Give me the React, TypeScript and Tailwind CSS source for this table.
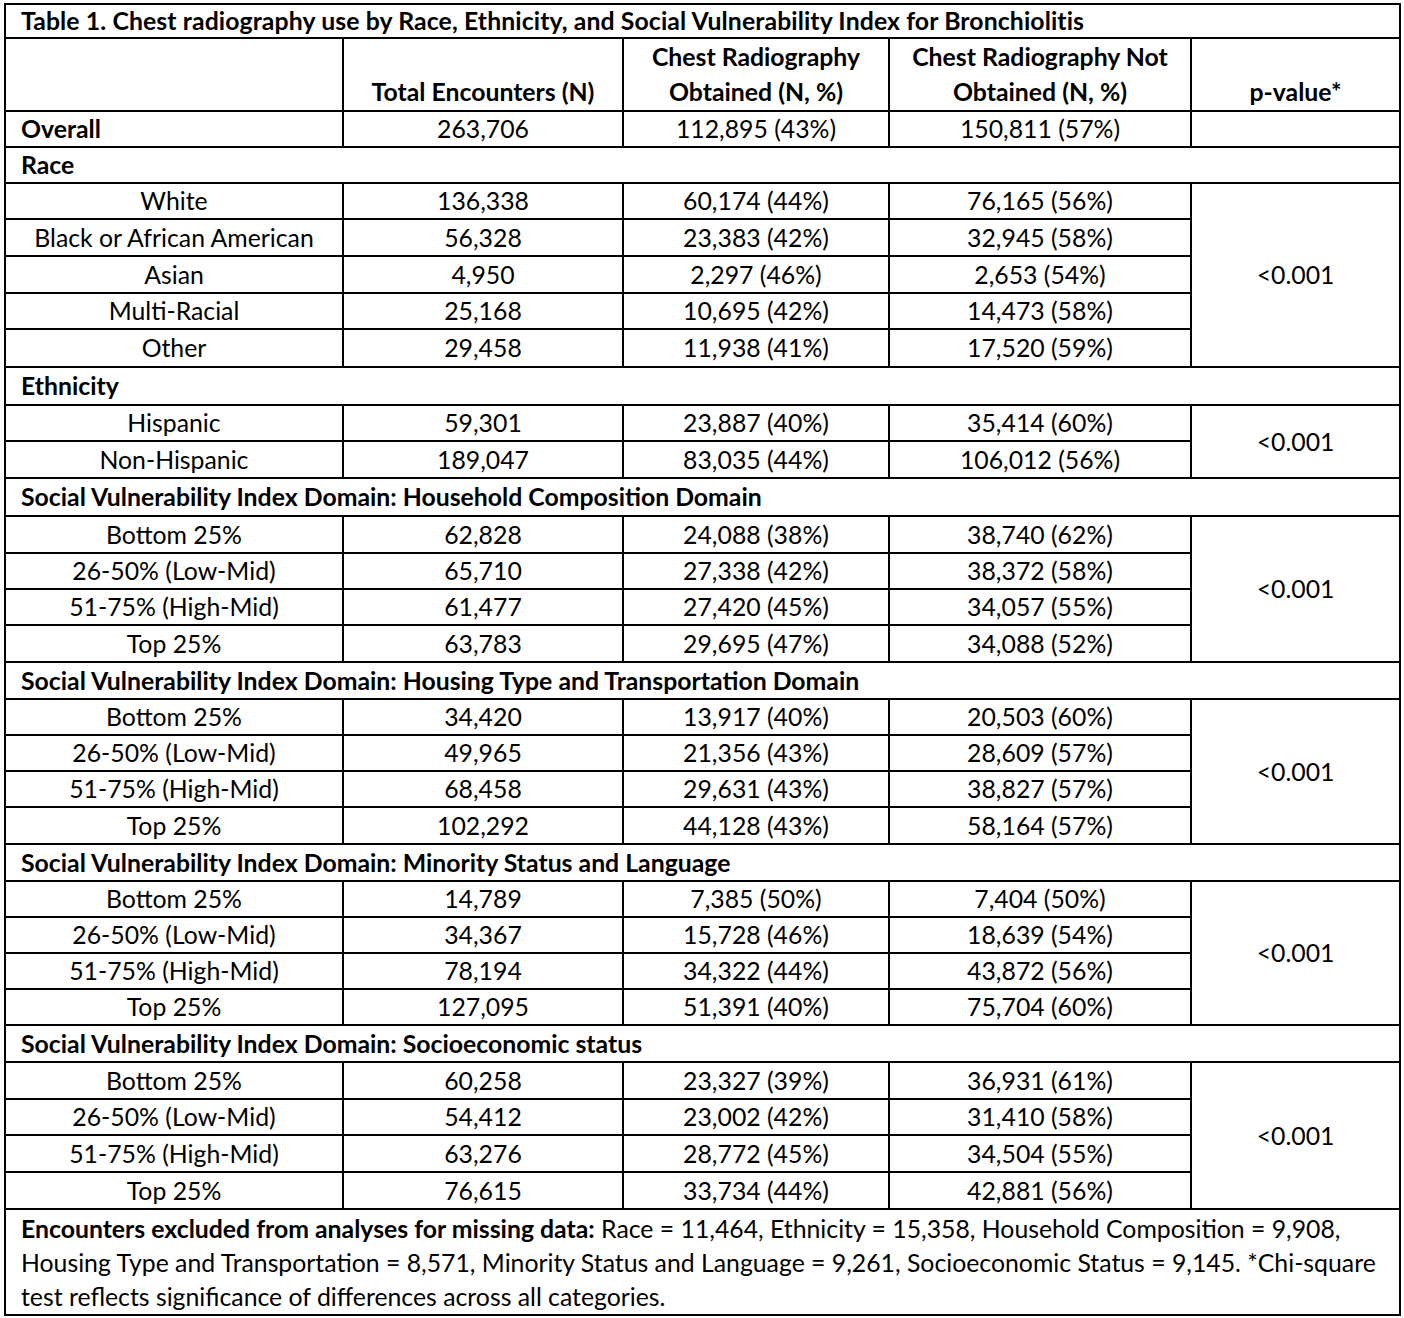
const groups = [
  {
    title: 'Race',
    hh: 36,
    heights: [36, 37, 37, 36, 38],
    rows: [
      ['White', '136,338', '60,174 (44%)', '76,165 (56%)'],
      ['Black or African American', '56,328', '23,383 (42%)', '32,945 (58%)'],
      ['Asian', '4,950', '2,297 (46%)', '2,653 (54%)'],
      ['Multi-Racial', '25,168', '10,695 (42%)', '14,473 (58%)'],
      ['Other', '29,458', '11,938 (41%)', '17,520 (59%)'],
    ],
  },
  {
    title: 'Ethnicity',
    hh: 38,
    heights: [36, 37],
    rows: [
      ['Hispanic', '59,301', '23,887 (40%)', '35,414 (60%)'],
      ['Non-Hispanic', '189,047', '83,035 (44%)', '106,012 (56%)'],
    ],
  },
  {
    title: 'Social Vulnerability Index Domain: Household Composition Domain',
    hh: 38,
    heights: [37, 36, 36, 37],
    rows: [
      ['Bottom 25%', '62,828', '24,088 (38%)', '38,740 (62%)'],
      ['26-50% (Low-Mid)', '65,710', '27,338 (42%)', '38,372 (58%)'],
      ['51-75% (High-Mid)', '61,477', '27,420 (45%)', '34,057 (55%)'],
      ['Top 25%', '63,783', '29,695 (47%)', '34,088 (52%)'],
    ],
  },
  {
    title: 'Social Vulnerability Index Domain: Housing Type and Transportation Domain',
    hh: 37,
    heights: [36, 36, 36, 37],
    rows: [
      ['Bottom 25%', '34,420', '13,917 (40%)', '20,503 (60%)'],
      ['26-50% (Low-Mid)', '49,965', '21,356 (43%)', '28,609 (57%)'],
      ['51-75% (High-Mid)', '68,458', '29,631 (43%)', '38,827 (57%)'],
      ['Top 25%', '102,292', '44,128 (43%)', '58,164 (57%)'],
    ],
  },
  {
    title: 'Social Vulnerability Index Domain: Minority Status and Language',
    hh: 37,
    heights: [36, 36, 36, 36],
    rows: [
      ['Bottom 25%', '14,789', '7,385 (50%)', '7,404 (50%)'],
      ['26-50% (Low-Mid)', '34,367', '15,728 (46%)', '18,639 (54%)'],
      ['51-75% (High-Mid)', '78,194', '34,322 (44%)', '43,872 (56%)'],
      ['Top 25%', '127,095', '51,391 (40%)', '75,704 (60%)'],
    ],
  },
  {
    title: 'Social Vulnerability Index Domain: Socioeconomic status',
    hh: 37,
    heights: [37, 36, 37, 37],
    rows: [
      ['Bottom 25%', '60,258', '23,327 (39%)', '36,931 (61%)'],
      ['26-50% (Low-Mid)', '54,412', '23,002 (42%)', '31,410 (58%)'],
      ['51-75% (High-Mid)', '63,276', '28,772 (45%)', '34,504 (55%)'],
      ['Top 25%', '76,615', '33,734 (44%)', '42,881 (56%)'],
    ],
  },
];

const heightClass: Record<number, string> = {
  36: 'h-[36px]',
  37: 'h-[37px]',
  38: 'h-[38px]',
};

const cell = 'border-2 border-black p-0';

export default function App() {
  return (
    <div className="min-h-[1318px] bg-white pl-[4px] pt-[3px] text-black">
      <table
        className="w-[1395px] table-fixed border-collapse border-2 border-black text-[24.8px] leading-none"
        style={{ fontFamily: 'Lato, "Open Sans", sans-serif' }}
      >
        <colgroup>
          <col className="w-[338px]" />
          <col className="w-[280px]" />
          <col className="w-[266px]" />
          <col className="w-[302px]" />
          <col className="w-[209px]" />
        </colgroup>
        <tbody>
          <tr className="h-[34px]">
            <td colSpan={5} className={`${cell} pl-[15px] text-left font-bold tracking-[0.1px]`}>
              Table 1. Chest radiography use by Race, Ethnicity, and Social Vulnerability Index for Bronchiolitis
            </td>
          </tr>
          <tr className="h-[72px] font-bold leading-[35px]">
            <td className={cell}></td>
            <td className={`${cell} pb-[1px] text-center align-bottom`}>Total Encounters (N)</td>
            <td className={`${cell} pb-[1px] text-center align-bottom`}>
              Chest Radiography
              <br />
              Obtained (N, %)
            </td>
            <td className={`${cell} pb-[1px] text-center align-bottom`}>
              Chest Radiography Not
              <br />
              Obtained (N, %)
            </td>
            <td className={`${cell} pb-[1px] text-center align-bottom`}>p-value*</td>
          </tr>
          <tr className="h-[36px]">
            <td className={`${cell} pl-[15px] font-bold`}>Overall</td>
            <td className={`${cell} text-center`}>263,706</td>
            <td className={`${cell} text-center`}>112,895 (43%)</td>
            <td className={`${cell} text-center`}>150,811 (57%)</td>
            <td className={cell}></td>
          </tr>
          {groups.map((g) => (
            <Group key={g.title} title={g.title} hh={g.hh} heights={g.heights} rows={g.rows} />
          ))}
          <tr>
            <td colSpan={5} className={`${cell} px-[15px] pt-[2px] pb-0 text-left leading-[34px]`}>
              <span className="font-bold">Encounters excluded from analyses for missing data:</span> Race = 11,464,
              Ethnicity = 15,358, Household Composition = 9,908,
              <br />
              Housing Type and Transportation = 8,571, Minority Status and Language = 9,261, Socioeconomic Status =
              9,145. *Chi-square
              <br />
              test reflects significance of differences across all categories.
            </td>
          </tr>
        </tbody>
      </table>
    </div>
  );
}

function Group({
  title,
  hh,
  heights,
  rows,
}: {
  title: string;
  hh: number;
  heights: number[];
  rows: string[][];
}) {
  return (
    <>
      <tr className={heightClass[hh]}>
        <td colSpan={5} className={`${cell} pl-[15px] pt-[1px] text-left font-bold`}>
          {title}
        </td>
      </tr>
      {rows.map((r, i) => (
        <tr key={r[0]} className={heightClass[heights[i]]}>
          <td className={`${cell} pt-[1px] text-center`}>{r[0]}</td>
          <td className={`${cell} pt-[1px] text-center`}>{r[1]}</td>
          <td className={`${cell} pt-[1px] text-center`}>{r[2]}</td>
          <td className={`${cell} pt-[1px] text-center`}>{r[3]}</td>
          {i === 0 && (
            <td rowSpan={rows.length} className={`${cell} pt-[1px] text-center`}>
              &lt;0.001
            </td>
          )}
        </tr>
      ))}
    </>
  );
}
